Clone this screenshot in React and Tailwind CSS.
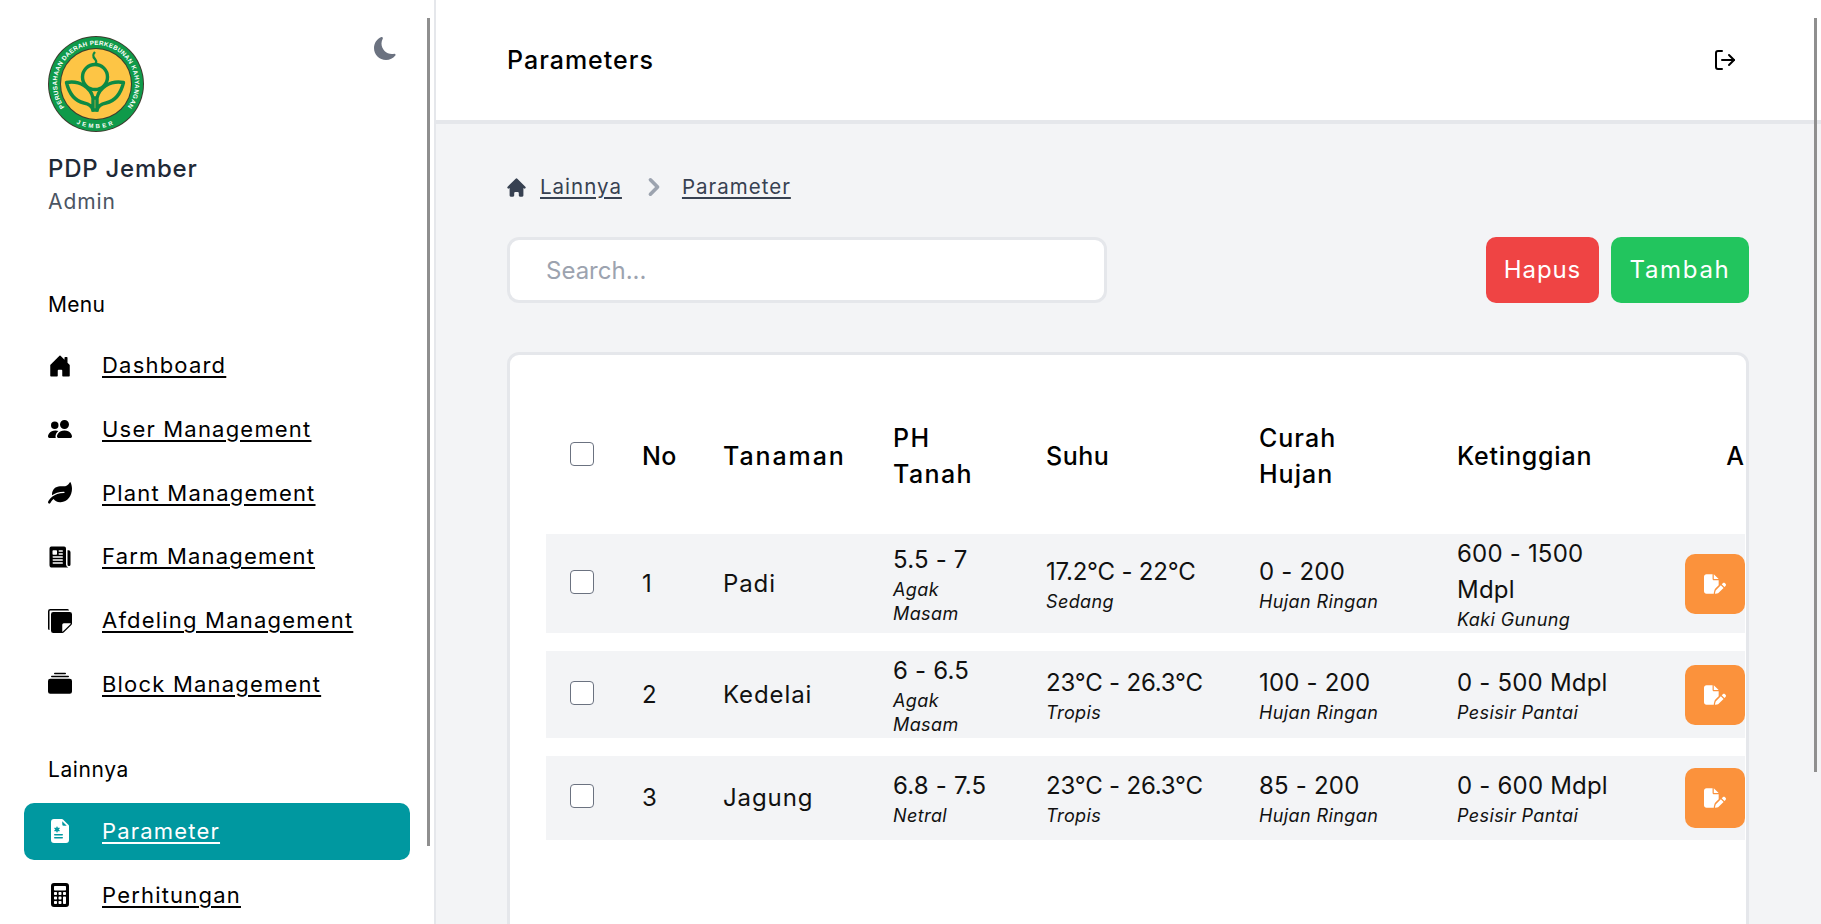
import React from "react";
import { BsHouseDoorFill, BsPeopleFill, BsStickiesFill, BsCollectionFill, BsFileEarmarkMedicalFill, BsCalculatorFill, BsMoonFill } from "react-icons/bs";
import { FaLeaf } from "react-icons/fa";
import { FaFilePen } from "react-icons/fa6";
import { FiLogOut } from "react-icons/fi";
import { IoNewspaper } from "react-icons/io5";

function Logo() {
  return (
    <svg viewBox="0 0 96 96" className="w-[96px] h-[96px]">
      <defs>
        <path id="arcTop" d="M 18.1 73 A 39 39 0 1 1 77.9 73" fill="none" />
        <path id="arcBottom" d="M 20 82 A 44 44 0 0 0 76 82" fill="none" />
      </defs>
      <circle cx="48" cy="48" r="48" fill="#3d3a2c" />
      <circle cx="48" cy="48" r="47" fill="#0f9a4a" />
      <circle cx="48" cy="48" r="36" fill="#3d3a2c" />
      <circle cx="48" cy="48" r="35" fill="#fdc545" />
      <text fontSize="6.3" fontWeight="700" fill="#fff" letterSpacing="0.25" fontFamily="Liberation Sans, sans-serif">
        <textPath href="#arcTop" startOffset="50%" textAnchor="middle">PERUSAHAAN DAERAH PERKEBUNAN KAHYANGAN</textPath>
      </text>
      <text fontSize="6" fontWeight="700" fill="#fff" letterSpacing="2.6" fontFamily="Liberation Sans, sans-serif">
        <textPath href="#arcBottom" startOffset="50%" textAnchor="middle">JEMBER</textPath>
      </text>
      <g fill="none" stroke="#0d8a44" strokeWidth="3.4" strokeLinejoin="round">
        <circle cx="47" cy="41" r="12.5" />
        <path d="M47 28 C 52 24, 41 22, 47 16" strokeWidth="2.4" />
        <path d="M18.5 46.5 C 32 44, 43 52, 45 62 L45 74 C 44 70, 41 68, 36 67 C 27 65, 21 57, 18.5 46.5 Z" />
        <path d="M75.5 46.5 C 62 44, 51 52, 49 62 L49 74 C 50 70, 53 68, 58 67 C 67 65, 73 57, 75.5 46.5 Z" />
        <path d="M43.5 74 L50.5 74 M45 62 L49 62" />
      </g>
    </svg>
  );
}

function NavItem({ icon, label, active }) {
  return (
    <a className={`flex items-center h-[57px] -mx-[24px] px-[24px] rounded-[10px] underline underline-offset-[3px] text-[22px] tracking-[1.2px] ${active ? "bg-[#0098a0] text-white" : "text-black"}`}>
      <span className="w-[54px] shrink-0 flex items-center text-[24px]">{icon}</span>
      {label}
    </a>
  );
}

const Main = ({ children, tight }) => <div className={`text-[24px] leading-[36px] text-[#111111] ${tight ? "tracking-[-0.2px]" : "tracking-[0.2px]"}`}>{children}</div>;
const Sub = ({ children }) => <div className="text-[18px] leading-[24px] italic text-[#111111] tracking-[0.4px]">{children}</div>;

const rows = [
  { n: "1", t: "Padi", ph: "5.5 - 7", phs: "Agak Masam", su: "17.2°C - 22°C", sus: "Sedang", cu: "0 - 200", h: "600 - 1500 Mdpl", hs: "Kaki Gunung", rh: "h-[99px]" },
  { n: "2", t: "Kedelai", ph: "6 - 6.5", phs: "Agak Masam", su: "23°C - 26.3°C", sus: "Tropis", cu: "100 - 200", h: "0 - 500 Mdpl", hs: "Pesisir Pantai", rh: "h-[87px]" },
  { n: "3", t: "Jagung", ph: "6.8 - 7.5", phs: "Netral", su: "23°C - 26.3°C", sus: "Tropis", cu: "85 - 200", h: "0 - 600 Mdpl", hs: "Pesisir Pantai", rh: "h-[84px]" },
];

const Check = () => <span className="block w-[24px] h-[24px] rounded-[4px] border border-[#6b7280] bg-white -translate-y-[2px]" />;

export default function App() {
  return (
    <div className="relative flex w-[1821px] h-[924px] overflow-hidden bg-[#f3f4f6] [font-family:Inter,sans-serif]">
      <aside className="w-[436px] shrink-0 h-full bg-white border-r-[2px] border-[#e5e7eb] pl-[48px] pr-[48px] pt-[36px]">
        <div className="flex justify-between">
          <Logo />
          <BsMoonFill className="w-[23px] h-[23px] text-[#6b7280] mr-[-11px] mt-[1px]" />
        </div>
        <div className="mt-[19px] text-[24px] leading-[36px] font-medium text-[#1f2937] tracking-[0.75px]">PDP Jember</div>
        <div className="text-[21px] leading-[30px] text-[#4b5563] tracking-[0.9px]">Admin</div>
        <div className="mt-[73px] text-[21px] leading-[30px] text-black tracking-[0.3px]">Menu</div>
        <nav className="mt-[17px] flex flex-col gap-[6.8px]">
          <NavItem icon={<BsHouseDoorFill />} label="Dashboard" />
          <NavItem icon={<BsPeopleFill />} label="User Management" />
          <NavItem icon={<FaLeaf />} label="Plant Management" />
          <NavItem icon={<IoNewspaper />} label="Farm Management" />
          <NavItem icon={<BsStickiesFill />} label="Afdeling Management" />
          <NavItem icon={<BsCollectionFill />} label="Block Management" />
        </nav>
        <div className="mt-[42px] text-[21px] leading-[30px] text-black tracking-[0.6px]">Lainnya</div>
        <nav className="mt-[18px] flex flex-col gap-[7px]">
          <NavItem active icon={<BsFileEarmarkMedicalFill />} label="Parameter" />
          <NavItem icon={<BsCalculatorFill />} label="Perhitungan" />
        </nav>
      </aside>

      <div className="flex-1 min-w-0 flex flex-col">
        <header className="h-[124px] shrink-0 bg-white border-b-[4px] border-[#e5e7eb] flex items-center justify-between pl-[71px] pr-[84px]">
          <h1 className="text-[25px] font-medium text-black tracking-[1px] translate-y-[1px]">Parameters</h1>
          <FiLogOut className="w-[24px] h-[24px] text-black" />
        </header>
        <main className="flex-1 min-h-0 pl-[71px] pr-[72px] pt-[47px]">
          <nav className="flex items-center h-[32px] text-[20.5px] text-[#374151] tracking-[1px]">
            <svg viewBox="0 0 20 20" fill="currentColor" className="w-[23px] h-[23px] -ml-[2.5px] mr-[12.5px]">
              <path d="M10.707 2.293a1 1 0 00-1.414 0l-7 7a1 1 0 001.414 1.414L4 10.414V17a1 1 0 001 1h2a1 1 0 001-1v-2a1 1 0 011-1h2a1 1 0 011 1v2a1 1 0 001 1h2a1 1 0 001-1v-6.586l.293.293a1 1 0 001.414-1.414l-7-7z" />
            </svg>
            <a className="underline underline-offset-[3px]">Lainnya</a>
            <svg viewBox="0 0 20 20" fill="currentColor" className="w-[36px] h-[36px] ml-[14px] mr-[10px] text-[#9ca3af]">
              <path d="M7.293 14.707a1 1 0 010-1.414L10.586 10 7.293 6.707a1 1 0 011.414-1.414l4 4a1 1 0 010 1.414l-4 4a1 1 0 01-1.414 0z" />
            </svg>
            <a className="underline underline-offset-[3px]">Parameter</a>
          </nav>
          <div className="mt-[34px] flex justify-between items-center">
            <div className="w-[600px] h-[66px] rounded-[12px] border-[3px] border-[#e5e7eb] bg-white flex items-center pl-[36px] text-[24px] text-[#9ca3af]"><span className="translate-y-[1px]">Search...</span></div>
            <div className="flex gap-[12px]">
              <button className="h-[66px] w-[113px] rounded-[10px] bg-[#ef4444] text-white text-[24px] tracking-[0.9px]">Hapus</button>
              <button className="h-[66px] w-[138px] rounded-[10px] bg-[#22c55e] text-white text-[24px] tracking-[1.7px]">Tambah</button>
            </div>
          </div>
          <section className="mt-[49px] h-[700px] rounded-[12px] border-[3px] border-[#e5e7eb] bg-white pl-[36px] pr-[1px] pt-[23px]">
            <div className="overflow-hidden">
              <table className="w-[1277px] table-fixed border-separate border-spacing-y-[18px] text-left">
                <colgroup>
                  <col className="w-[72px]" />
                  <col className="w-[81px]" />
                  <col className="w-[170px]" />
                  <col className="w-[153px]" />
                  <col className="w-[213px]" />
                  <col className="w-[198px]" />
                  <col className="w-[228px]" />
                  <col className="w-[162px]" />
                </colgroup>
                <thead>
                  <tr className="h-[120px] text-[25px] leading-[36px] text-black tracking-[1px]">
                    <th className="pl-[24px] font-medium"><Check /></th>
                    <th className="pl-[24px] font-medium tracking-[0.4px]">No</th>
                    <th className="pl-[24px] font-medium tracking-[1.9px]">Tanaman</th>
                    <th className="pl-[24px] pr-[30px] font-medium tracking-[1.4px]">PH Tanah</th>
                    <th className="pl-[24px] font-medium tracking-[0.5px]">Suhu</th>
                    <th className="pl-[24px] pr-[40px] font-medium">Curah Hujan</th>
                    <th className="pl-[24px] font-medium tracking-[0.8px]">Ketinggian</th>
                    <th className="pl-[24px] font-medium text-center">Aksi</th>
                  </tr>
                </thead>
                <tbody>
                  {rows.map((r) => (
                    <tr key={r.n} className={`${r.rh} bg-[#f3f4f6]`}>
                      <td className="pl-[24px]"><Check /></td>
                      <td className="pl-[24px]"><Main>{r.n}</Main></td>
                      <td className="pl-[24px] tracking-[0.8px]"><div className="text-[24px] leading-[36px] text-[#111111] tracking-[0.9px]">{r.t}</div></td>
                      <td className="pl-[24px] pr-[30px]"><Main>{r.ph}</Main><Sub>{r.phs}</Sub></td>
                      <td className="pl-[24px]"><Main tight>{r.su}</Main><Sub>{r.sus}</Sub></td>
                      <td className="pl-[24px]"><Main>{r.cu}</Main><Sub>Hujan Ringan</Sub></td>
                      <td className="pl-[24px] pr-[24px]"><Main>{r.h}</Main><Sub>{r.hs}</Sub></td>
                      <td className="pl-[24px]">
                        <button className="w-[60px] h-[60px] rounded-[10px] bg-[#fb923c] flex items-center justify-center text-white">
                          <FaFilePen className="w-[22px] h-[20px]" />
                        </button>
                      </td>
                    </tr>
                  ))}
                </tbody>
              </table>
            </div>
          </section>
        </main>
      </div>

      <div className="absolute left-[427px] top-[18px] w-[3px] h-[828px] bg-[#8f8f8f]" />
      <div className="absolute left-[1814px] top-[18px] w-[3px] h-[754px] bg-[#8f8f8f]" />
    </div>
  );
}
